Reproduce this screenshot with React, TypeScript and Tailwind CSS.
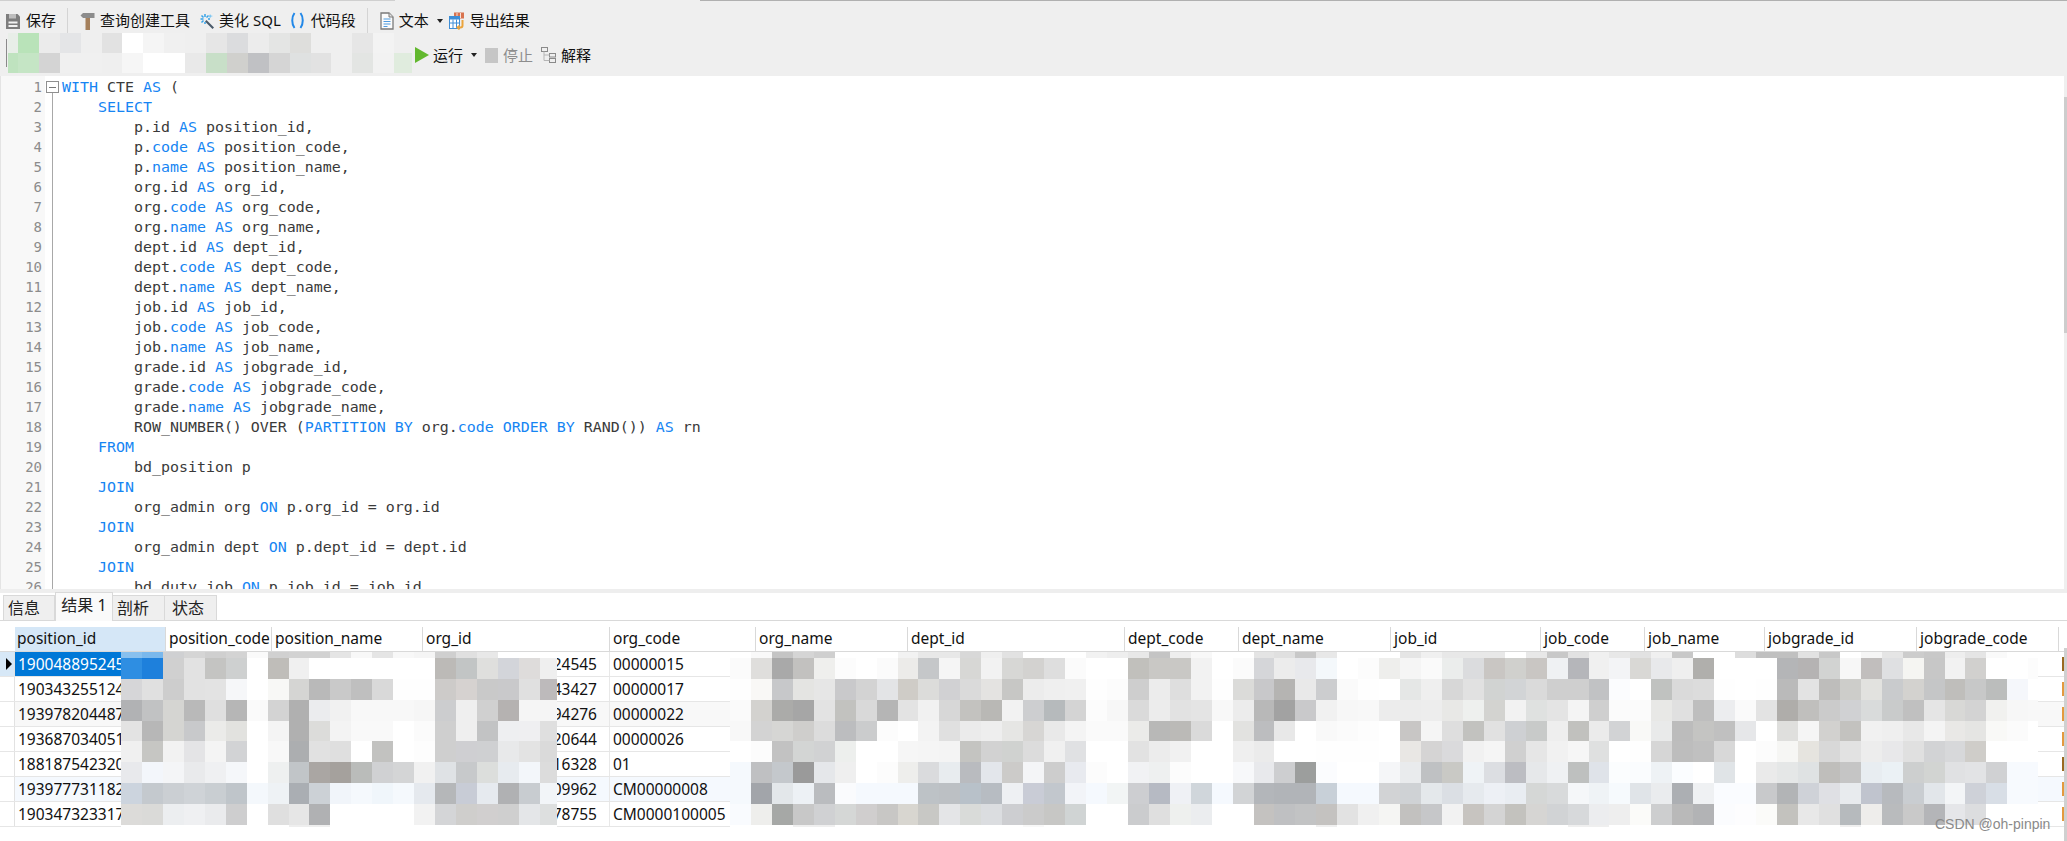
const sql = [
  "WITH CTE AS (",
  "    SELECT",
  "        p.id AS position_id,",
  "        p.code AS position_code,",
  "        p.name AS position_name,",
  "        org.id AS org_id,",
  "        org.code AS org_code,",
  "        org.name AS org_name,",
  "        dept.id AS dept_id,",
  "        dept.code AS dept_code,",
  "        dept.name AS dept_name,",
  "        job.id AS job_id,",
  "        job.code AS job_code,",
  "        job.name AS job_name,",
  "        grade.id AS jobgrade_id,",
  "        grade.code AS jobgrade_code,",
  "        grade.name AS jobgrade_name,",
  "        ROW_NUMBER() OVER (PARTITION BY org.code ORDER BY RAND()) AS rn",
  "    FROM",
  "        bd_position p",
  "    JOIN",
  "        org_admin org ON p.org_id = org.id",
  "    JOIN",
  "        org_admin dept ON p.dept_id = dept.id",
  "    JOIN",
  "        bd_duty_job ON p.job_id = job.id",
];

const keywords = /\b(WITH|AS|SELECT|code|name|FROM|JOIN|ON|PARTITION|BY|ORDER)\b/;

const columns = [
  { name: "position_id", width: "w-[151px]", active: true },
  { name: "position_code", width: "w-[106px]" },
  { name: "position_name", width: "w-[151px]" },
  { name: "org_id", width: "w-[187px]" },
  { name: "org_code", width: "w-[146px]" },
  { name: "org_name", width: "w-[152px]" },
  { name: "dept_id", width: "w-[217px]" },
  { name: "dept_code", width: "w-[114px]" },
  { name: "dept_name", width: "w-[152px]" },
  { name: "job_id", width: "w-[150px]" },
  { name: "job_code", width: "w-[104px]" },
  { name: "job_name", width: "w-[120px]" },
  { name: "jobgrade_id", width: "w-[152px]" },
  { name: "jobgrade_code", width: "w-[142px]" },
];

const rows = [
  { id: "190048895245", org: "24545", code: "00000015", bg: "bg-white" },
  { id: "190343255124", org: "43427", code: "00000017", bg: "bg-white" },
  { id: "193978204487", org: "94276", code: "00000022", bg: "bg-[#f8f8f8]" },
  { id: "193687034051", org: "20644", code: "00000026", bg: "bg-white" },
  { id: "188187542320", org: "16328", code: "01", bg: "bg-white" },
  { id: "193977731182", org: "09962", code: "CM00000008", bg: "bg-[#f5f9fe]" },
  { id: "190347323317", org: "78755", code: "CM0000100005", bg: "bg-white" },
];

const mosaicHeights = [6, 21, 21, 21, 20, 21, 21, 21, 21, 2];

const leftMosaic = [
  "88c0ee 7ab8ec cfd0d2 d5 cf d3 fa d0 d2 d2 e5 f8 e5 f8 f5 cf e0 e8 ff ff ff",
  "2e8ee2 1e80dc d0 e2 c4c4c2 ced0d0 ff bfbdb9 f0 ff ff ff ff ff ff bcbab7 c2c5c5 dfdfdd d3d5da dedcdb ef",
  "d6d6d8 e0 cd e2 e3 f6f7f9 ff f8f8f6 d5d5d3 b9 c9 bf d9 fe fe cdcbc9 d6d2d0 c9 c9c9cb e0 bdbabb",
  "b1b2b4 c1c2c3 d5d5d2 b9 df b6 fa d3 b0 ebecee f1 f8 f8 f8 f6 cccdcf ef d0 b5b2b1 f5 f5",
  "e3 b7 d5d5d2 c8c9cb ebebe9 e2e2df ff f4 b0 dcdcda f3 f9 f9 ff fb cf ef c2c3c4 eeeff1 efeff1 df",
  "f0 c6c6c3 f2 e4e4e6 f4 d2d3d5 ff f8 acaeb0 e1 df ff c2c2c0 ff fd cf cfcfd2 cfd0d2 e8e9ea e3 da",
  "e8e9ec f3f6fb f4f5f7 e9eaec eff0f2 f5f7fa ff eef0f0 c1c5c8 aaa6a3 a5a19d babcba d0d1d3 d4d5d6 f1 dfe2e5 c7c9cb dcdedc e7ebef f3f6fa dc",
  "ccd4de c4c9ce cbcfd3 cfd3d7 c9ced2 bfc5ca f4f8fc eef2f5 aaaeb3 ccd1d6 f1f5fa f5f9fd f0f6fb f5f9fd e5e9ee b5b7b9 c8ccd6 e6eaef b0b1b3 c8ccd0 f2f5f8",
  "dcdbd9 dadad8 eceef0 eff0f2 eaebed cececf ff df e6 b0b1b3 ff ff ff ff f2 d4d5d7 cfcecc d1cfcf cf e4e6e8 dddfdf",
  "ff ff ff ff ff ff ff ff ee ee ff ff ff ff ff ff ff ff ff ff ff",
];

const rightMosaic = [
  "ff f9 c4 d5 cf ff ff ff f2 e8 e8 d8 ef e2 ff ff ff f2 ee e8 c4 ee f8 ff ff e4 e0 c8 e8 ff ff ff e5 f0 e8 e8 e8 ff e8 c8 e2 f0 e8 e2 f0 c8 ff ff dd c0 c0 e2 c8 ff f5 e5 cc c8 ee e5 fa ff ff",
  "fb dfdedc a9 c2c1bf efefed fc ff fb ecebe9 c5c7c9 f5 d7d7d5 f2 d7d7d5 d3d2d0 de fb ff ff c1c0bc c9c8c5 c9c8c5 f2 ff fb d5d6d9 ec e8e9ec f4f8fb ff fc eeeeec f5 fa ebedec dbdcde c9c6c3 d0d0cd c9c6c3 eff1f3 b5b6ba f0 f3f4f6 d9d8d5 e8e9eb ef b0afac ff ff ff b4b5b7 b5b3b3 d2d3d2 f7 c1bebd dfe0e2 f5f5f2 c7 f2 d1d0ce ff ff fc",
  "fe f9f8f6 c7c8ca e4e4e2 e6 c9c9cb d3 e3e4e6 cfccc7 dcdcda d1d1d3 da e4e3e1 c7c7c5 ec ef f0 fe fc ce ec de f2 fe dbdbd9 c8c8ca b5b4b2 e9 cccdcf fa fe ff e5e7e6 ef d7 e1 d1d3d2 d2d4d6 da cf cf c1c2c4 fbfcfe ff c0c2c0 da dc fe ff fe ba e3 bebdbb cdcdca e2e2df c9cbcd d3d2cf c5c6c7 bfbebb c7c8c8 bbbdbc f5f7fb ff",
  "fa d3d2cf ababa9 a6 e3 c2c2bf d9 b5 e3 f1 d7 c3c2bf b9b8b5 f2 cdced0 b6babc d4 fc f7 da ec e2 e4 f8 ec b8 a2 c9c9cb f1 f7 f8 ec ec ed e8e8e6 eef0ee d3d3d0 f2 dfe1e0 e4 f4 cf fb fb e8e8e6 e0 be ecedef fa e3 afadaa c0bfbd cb d0d1d3 d9dbdb c9cbcb c0 e5 d8d8d6 d3 f1f1ef f7 f8",
  "f8 d3 d6d6d4 cfcecc dc bcbdbf cbcccd fc ff f3 e0 eb ee e6e6e4 d7d6d4 e9 f4 fa fa ebebe9 b8b8b7 bbbab7 da ff e2e2e0 bcbdbf e8 ff f9 fb fd ff c8c6c5 f5 de c2c2bf e1 ced0d3 c8cac9 ee c1c1be eb d2d3d5 f9f9f7 e9eaea bc c4c4c2 c0 e6e7e9 ff dfdfdd f5 d2d1cf c3c2bf f1 ef e8 f4 e9e8e6 e5e5e3 f9f9f7 fb ff",
  "ff fc c2 d3d5d4 d1d2d3 edefed ff ff f6 f5 f4 c4c4c1 d2 d0d2d0 dc f0 e0e1e3 ff ff e2 ec f1 ff ff ef eb ff ff fe fe fe ff e9e7e4 d5d4d4 dadadc f1 f5 d0 e6 f1 f6 dfe0e0 ff fe d6 bd c0 d8 ff fc f6f6f4 e6e4df d8 e2 ed e8e8ea e0 d2d3d5 d7d8da cfcdc9 ff ff ff",
  "f5f9fd bfc0c2 c4c8cc 9a e5e7ea ef ff fc eeeeec dadbdd e8ecef b9bbbf e3e6eb cccbc9 f4f5f7 cd e8eaef fc ff f1f2f4 eef0f0 fc ff ff f7f8fa e8e9ec cdced0 9c9e9d fbfcfe ff ff f5f6f8 e9ebed bfc1c3 c9c9c5 eff3f6 dcdee2 bcbdc2 e6e8ea eff1f3 bec0bf dfe3e9 fbfdfe fafcfe eef2f5 fbfdff ff e0e4e7 ff ea e5e7e7 dfe2e3 bfbebb c5 e8edf1 ebf1f5 cdcfcf d2d4d2 e0e1e3 e2e3e5 d0d1d3 f7fafe f7fafe",
  "f5f9fd a2a5aa e3e7ea edf1f5 babcbf fafbfd f5f9fe f5f9fe f5f9fe bdc2c6 bcc0c4 b8c1c9 b7bcc2 eef0f3 c9ccd6 c2c7cd f2f4f8 f5f9fe f2f5f5 cdced1 b6bac3 eff1f5 d0d6db f5f9fe d2d4d6 b3b6ba b1b4b8 b1b4b8 c8d0d8 f5f9fe f5f9fe d2d3d5 cfd2d5 e4e8eb dbdfe4 e6eaee edf0f5 e9edf2 d5d7d6 d8dadb f5f7f9 eff3f6 f6fafd e0e4e8 eaecee acafb3 eff1f3 fafcff fafcff c8c9cb b2b4b6 cfd2d8 dfe0e4 e8ebee c0c4ce b7babe c9cdd1 e2e6ea f3f5f7 ced1d8 d8dee6 f7fafe f7fafe",
  "f9fbfe eeeeec a6a8a6 c8 d0d1d3 d5d7d6 d0cece c8c7c5 d8d6d0 c8c8c5 e4e5e7 d9dbd9 dbdde0 cdced1 cb c7c7c5 d0d4d4 ff ff cbccce df eef0ee ebedef ff ff c4c2c0 bfc0c2 c2c3c4 c4c2c0 e2 f0 f5f5f3 c2c1bf c6c7c9 f2 c7c4c0 d4 c3c2be d6d5d3 d1d3d5 d7d9db ecedef ee fbfbf9 cdcecf b9 b2b3b5 fbfcfe fdfdfe fbfbf9 c3c2be e8 e0 b6babd eeedeb b9bbbd c9 b4b5b8 e5e6e9 dcdddf ff ff ff",
  "ff ff ff ef ef ff ff ff ff ff ff ff ff ff f8 ff ff ff ff ff ff ff ff ff ff ff ff ff ef ff ff ff ff ff ff ff ff ff ff ff ef ef ff ff ff ff ff ff ff ff ff ff ff ef ff ff ff ff ff ff ff ff ff",
];

const toolbarMosaic = [
  "e8eee8 b9e3b9 eb e4e5e7 ef e2 ff f5 f0 ef e6 dbdcde ec e4e5e4 dededc ef ef e6 f3 ef",
  "bfe3bf c5e5c5 d4 f0 f0 ef f6 ff ff e9 c8dfc8 d0d0cd c0c1c4 d5 dfe1e1 e2 ef e3e5e3 f2 e0ecde",
];

function toColor(token: string) {
  return token.length === 2 ? `#${token}${token}${token}` : `#${token}`;
}

function Mosaic({
  data,
  width,
  height,
  heights,
  blockWidth,
  offset = 0,
  className,
}: {
  data: string[];
  width: number;
  height: number;
  heights: number[];
  blockWidth: number;
  offset?: number;
  className?: string;
}) {
  let y = 0;
  return (
    <svg width={width} height={height} shapeRendering="crispEdges" className={className}>
      {data.map((row, r) => {
        const top = y;
        y += heights[r];
        return row.split(" ").map((token, c) => (
          <rect key={`${r}-${c}`} x={c * blockWidth - offset} y={top} width={blockWidth} height={heights[r]} fill={toColor(token)} />
        ));
      })}
    </svg>
  );
}

function SaveIcon() {
  return (
    <svg width="14" height="16" viewBox="0 0 14 16">
      <path d="M0 1h11.5L14 3.5V16H0z" fill="#7d7d7d" />
      <rect x="3" y="1" width="7" height="4.5" fill="#bdbdbd" />
      <rect x="2.5" y="8.5" width="9" height="2" fill="#f2f2f2" />
      <rect x="2.5" y="12" width="9" height="2" fill="#f2f2f2" />
    </svg>
  );
}

function HammerIcon() {
  return (
    <svg width="15" height="18" viewBox="0 0 15 18">
      <path d="M0.5 3.5 3 1h11.5v5H3z" fill="#8c8c8c" />
      <rect x="5.5" y="6" width="4.5" height="12" fill="#a5805c" />
    </svg>
  );
}

function WandIcon() {
  return (
    <svg width="15" height="16" viewBox="0 0 15 16">
      <path d="M6.5 7 14 14.5 12.5 16 5 8.5z" fill="#4a5a6a" />
      <path d="M5 1v3M5 9v2M0.5 6h3M8 6h2M1.5 2.5l2 2M8.5 2.5l-2 2M1.5 9.5l2-2" stroke="#36a3e8" strokeWidth="1.5" fill="none" />
      <path d="M10 1l1 1.5L13 3l-2 .8L10 5.5 9.5 4 8.5 3l1-.5z" fill="#7cc6f2" />
    </svg>
  );
}

function ParensIcon() {
  return (
    <svg width="15" height="17" viewBox="0 0 15 17" fill="none" stroke="#2288e8" strokeWidth="2">
      <path d="M4.5 1C1.5 5 1.5 12 4.5 16" />
      <path d="M10.5 1c3 4 3 11 0 15" />
    </svg>
  );
}

function DocIcon() {
  return (
    <svg width="14" height="18" viewBox="0 0 14 18">
      <path d="M1 1h8l4 4v12H1z" fill="#fbfbfb" stroke="#7a7a7a" strokeWidth="1.3" />
      <path d="M9 1v4h4" fill="#e0e0e0" stroke="#7a7a7a" />
      <path d="M3.5 7h7M3.5 9.5h7M3.5 12h7M3.5 14.5h4" stroke="#4f9be0" strokeWidth="1.1" />
    </svg>
  );
}

function ExportIcon() {
  return (
    <svg width="16" height="18" viewBox="0 0 16 18">
      <rect x="5" y="0.5" width="10" height="6" fill="#d9734e" />
      <path d="M8 1v5M11.5 1v5" stroke="#fff" strokeWidth="0.8" />
      <rect x="0.5" y="4.5" width="10" height="12" fill="#fff" stroke="#3f8ed6" />
      <rect x="0.5" y="4.5" width="10" height="3" fill="#3f8ed6" />
      <path d="M0.5 11h10M4 7.5v9M7.5 7.5v9" stroke="#3f8ed6" />
      <path d="M13.5 8v5.5a2 2 0 0 1-2 2H9" stroke="#eba43c" strokeWidth="2" fill="none" />
      <path d="M10.5 12.5v6L7 15.5z" fill="#eba43c" />
    </svg>
  );
}

function ExplainIcon() {
  return (
    <svg width="15" height="16" viewBox="0 0 15 16" fill="none" stroke="#8a8a8a">
      <rect x="0.5" y="0.5" width="6" height="4" />
      <rect x="8.5" y="6.5" width="6" height="3.5" />
      <rect x="8.5" y="11.5" width="6" height="4" />
      <path d="M3 4.5v9h5.5M3 8h5.5" stroke="#b5b5b5" />
    </svg>
  );
}

function Caret() {
  return <span className="h-0 w-0 border-x-[3px] border-t-[4px] border-x-transparent border-t-[#222]" />;
}

function Separator() {
  return <div className="h-[25px] w-px bg-[#d4d4d4]" />;
}

function SqlLine({ text }: { text: string }) {
  const parts = text.split(keywords);
  return (
    <div className="h-5 whitespace-pre leading-5">
      {parts.map((part, i) => (
        <span key={i} className={i % 2 === 1 ? "text-[#1685f3]" : "text-[#3a3a3a]"}>
          {part}
        </span>
      ))}
    </div>
  );
}

export default function App() {
  return (
    <div className="relative flex h-[841px] w-[2067px] flex-col overflow-hidden bg-white font-['Noto_Sans','Noto_Sans_CJK_SC',sans-serif] text-[15px] text-[#111]">
      {/* toolbar */}
      <div className="flex h-[76px] shrink-0 flex-col bg-[#efefef]">
        <div className="flex h-px">
          <div className="w-[395px] bg-[#cfcfcf]" />
          <div className="w-[305px]" />
          <div className="flex-1 bg-[#b0b0b0]" />
        </div>
        <div className="flex h-[32px] items-center pt-[7px]">
          <div className="ml-[6px]"><SaveIcon /></div>
          <span className="ml-[6px]">保存</span>
          <div className="ml-[11px]"><Separator /></div>
          <div className="ml-[12px]"><HammerIcon /></div>
          <span className="ml-[5px]">查询创建工具</span>
          <div className="ml-[10px]"><WandIcon /></div>
          <span className="ml-[4px]">美化 SQL</span>
          <div className="ml-[9px]"><ParensIcon /></div>
          <span className="ml-[6px]">代码段</span>
          <div className="ml-[11px]"><Separator /></div>
          <div className="ml-[12px]"><DocIcon /></div>
          <span className="ml-[5px]">文本</span>
          <div className="ml-[8px] flex"><Caret /></div>
          <div className="ml-[6px]"><ExportIcon /></div>
          <span className="ml-[5px]">导出结果</span>
        </div>
        <div className="flex items-center">
          <div className="ml-[6px] h-[28px] w-px bg-[#8a8a8a]" />
          <Mosaic className="ml-px" data={toolbarMosaic} width={404} height={40} heights={[20, 20]} blockWidth={20.9} offset={11} />
          <div className="ml-[3px] flex items-center pt-[4px]">
            <svg width="14" height="16" viewBox="0 0 14 16">
              <path d="M0 0 14 8 0 16z" fill="#62b82e" />
            </svg>
            <span className="ml-[4px]">运行</span>
            <div className="ml-[8px] flex"><Caret /></div>
            <div className="ml-[8px] h-[15px] w-[13px] bg-[#c6c6c6]" />
            <span className="ml-[5px] text-[#8d8d8d]">停止</span>
            <div className="ml-[8px]"><ExplainIcon /></div>
            <span className="ml-[5px]">解释</span>
          </div>
        </div>
      </div>

      {/* sql editor */}
      <div className="flex h-[513px] shrink-0 overflow-hidden border-l border-[#e4e4e4]">
        <div className="w-[44px] shrink-0 bg-[#f8f8f8] pt-px pr-[3px] text-right font-['DejaVu_Sans_Mono',monospace] text-[14px] text-[#8c8c8c]">
          {sql.map((_, i) => (
            <div key={i} className="h-5 leading-5">{i + 1}</div>
          ))}
        </div>
        <div className="flex w-[17px] shrink-0 flex-col items-center pt-[5px] pr-[2px]">
          <div className="flex h-[12px] w-[13px] shrink-0 items-center justify-center border border-[#8f8f8f] bg-white">
            <div className="h-px w-[7px] bg-[#777]" />
          </div>
          <div className="w-px flex-1 bg-[#a8a8a8]" />
        </div>
        <div className="flex-1 pt-px font-['DejaVu_Sans_Mono',monospace] text-[14.95px]">
          {sql.map((line, i) => (
            <SqlLine key={i} text={line} />
          ))}
        </div>
        <div className="flex w-[3px] shrink-0 flex-col bg-[#efefef] pt-[21px]">
          <div className="h-[236px] bg-[#cdcdcd]" />
        </div>
      </div>

      <div className="h-[4px] shrink-0 bg-[#eeeeee]" />

      {/* result tabs */}
      <div className="flex h-[28px] shrink-0 items-end border-b border-[#d9d9d9] pl-[3px] text-[16px] text-[#222]">
        <div className="flex h-[25px] w-[52px] items-center border border-b-0 border-[#d9d9d9] bg-[#efefef] pl-[4px]">信息</div>
        <div className="-mb-px flex h-[29px] w-[58px] items-center justify-center border-x border-t border-[#d9d9d9] bg-[#fafafa] pb-1">结果 1</div>
        <div className="flex h-[25px] w-[52px] items-center border-t border-r border-[#d9d9d9] bg-[#efefef] pl-[4px]">剖析</div>
        <div className="flex h-[25px] w-[52px] items-center border-t border-r border-[#d9d9d9] bg-[#efefef] pl-[7px]">状态</div>
      </div>

      {/* result grid */}
      <div className="relative mt-[6px] flex-1 overflow-hidden">
        <div className="flex h-[25px] border-b border-[#d9d9d9] pl-[15px] font-['Noto_Sans',sans-serif] text-[15.5px]">
          {columns.map((col) => (
            <div
              key={col.name}
              className={`flex shrink-0 items-center overflow-hidden whitespace-nowrap border-r border-[#d9d9d9] ${col.width} ${col.active ? "bg-[#d5e7f7] pl-[2px]" : "pl-[3px]"}`}
            >
              {col.name}
            </div>
          ))}
        </div>

        {rows.map((row, index) => (
          <div key={row.id} className={`flex h-[25px] border-b border-[#e6e6e6] font-['Noto_Sans',sans-serif] text-[15.5px] ${row.bg}`}>
            <div className={`flex w-[15px] shrink-0 items-center border-r border-[#e2e2e2] pl-[6px] ${index === 0 ? "bg-[#d7e8f7]" : "bg-white"}`}>
              {index === 0 && <span className="h-0 w-0 border-y-[6px] border-l-[6px] border-y-transparent border-l-black" />}
            </div>
            <div className={`flex w-[151px] shrink-0 items-center overflow-hidden pt-px pl-[3px] ${index === 0 ? "bg-[#0078d7] text-white" : ""}`}>{row.id}</div>
            <div className="w-[106px] shrink-0" />
            <div className="w-[151px] shrink-0" />
            <div className="flex w-[187px] shrink-0 items-center justify-end border-r border-[#e8e8e8] pt-px pr-[12px]">{row.org}</div>
            <div className="flex w-[146px] shrink-0 items-center whitespace-nowrap pt-px pl-[3px]">{row.code}</div>
            <div className="flex-1" />
            <div className="flex w-[5px] shrink-0 items-center">
              <div className={`h-[14px] w-[2px] ${index === 0 || index === 4 ? "bg-[#9a6a20]" : "bg-[#e39a3e]"}`} />
            </div>
          </div>
        ))}

        <Mosaic className="absolute top-[25px] left-[121px]" data={leftMosaic} width={436} height={175} heights={mosaicHeights} blockWidth={20.94} />
        <Mosaic className="absolute top-[25px] left-[730px]" data={rightMosaic} width={1308} height={175} heights={mosaicHeights} blockWidth={20.94} />

        <div className="absolute top-[21px] right-0 bottom-0 w-[3px] bg-[#d0d0d0]" />
      </div>

      <div className="absolute top-[815px] left-[1935px] font-['Liberation_Sans',sans-serif] text-[14px] leading-[18px] text-[#8a8a8a]">
        CSDN @oh-pinpin
      </div>
    </div>
  );
}
